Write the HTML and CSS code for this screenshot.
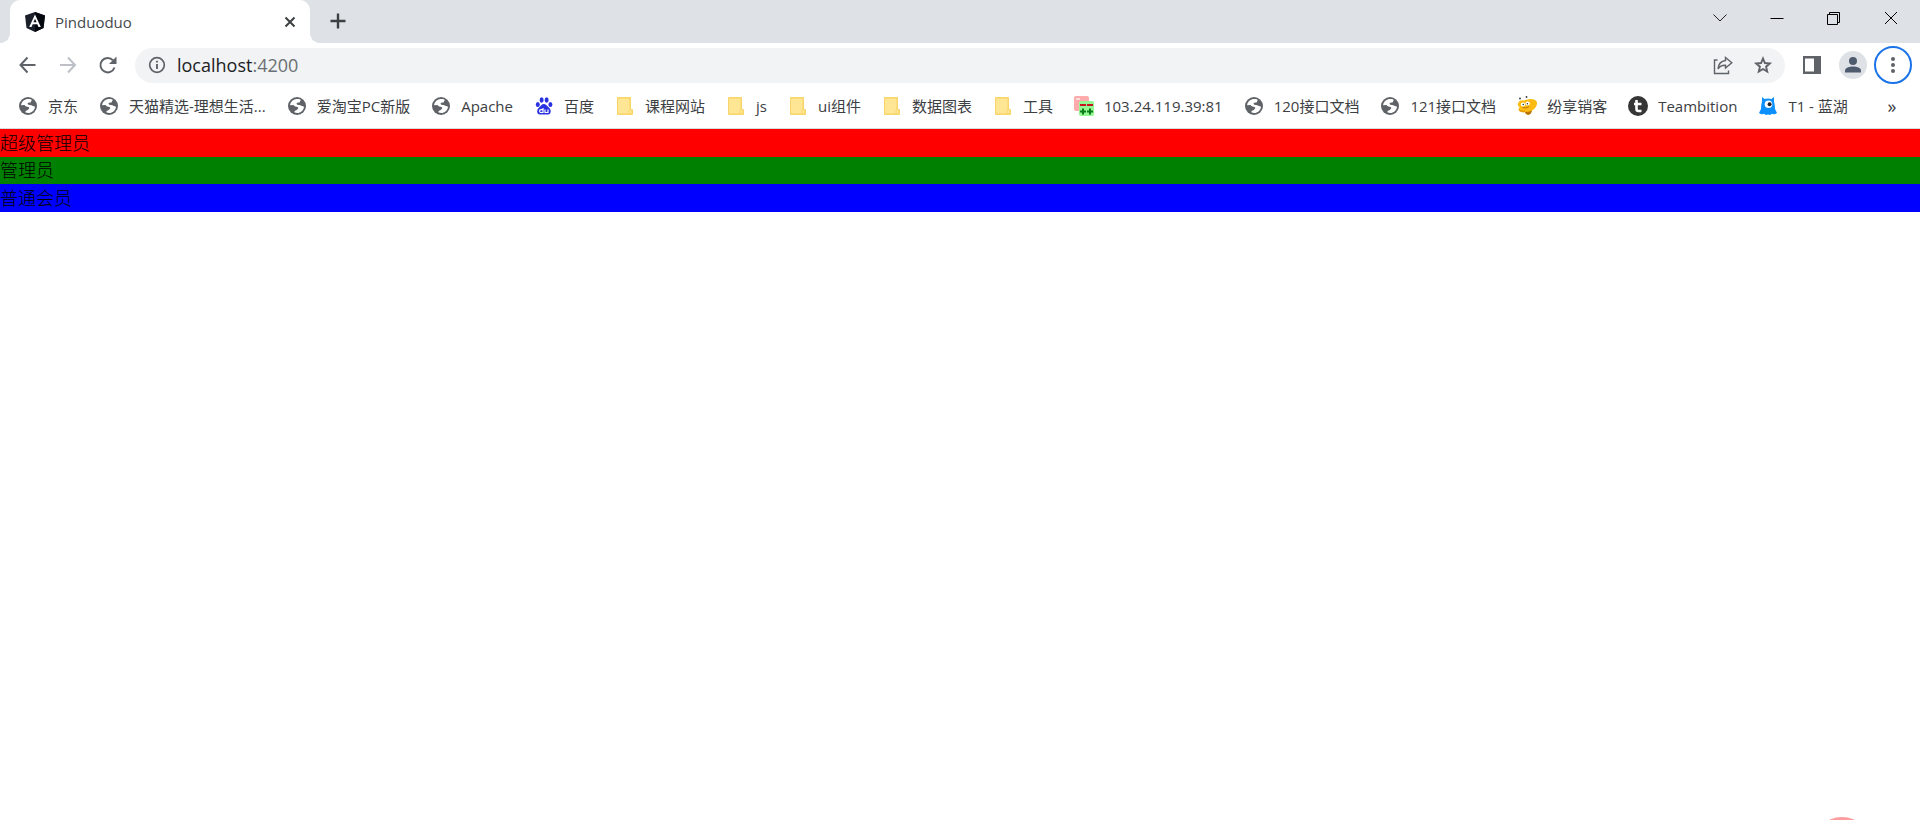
FILE: index.html
```html
<!DOCTYPE html>
<html lang="zh-CN">
<head>
<meta charset="utf-8">
<title>Pinduoduo</title>
<link rel="stylesheet" href="styles.css">
</head>
<body>
<svg class="sprite" aria-hidden="true">
  <symbol id="globe" viewBox="0 0 18 18">
    <circle cx="9" cy="9" r="9" fill="#5f6368"/>
    <path d="M9.300 2.100C11.300 2.100 12.600 2.700 13 3.200C12.200 3.500 11.800 4.300 12 5.200L9.300 5.800C8.300 6.100 8.500 7.300 9.400 7.700L12.400 8.200C13.600 9.300 14.300 8.700 16 9.700C15.700 13.200 12.700 15.900 9.200 16C8.300 16 7.500 15.800 6.600 15.500L6.500 13.900L8.300 13.300L10.200 11.600C10.400 10.500 9.700 9.900 8.500 9.800C6.400 9.700 6.300 8.300 5 8.100L2.100 8.300C2.400 4.800 5.500 2.100 9.300 2.100Z" fill="#fff"/>
  </symbol>
  <symbol id="folder" viewBox="0 0 18 18">
    <path d="M2 0h12a1 1 0 0 1 1 1v11h1q1 0 1 1v4q0 1-1 1H2q-1 0-1-1V1q0-1 1-1Z" fill="#f8d568"/>
    <path d="M2 1.500h11.500v11l-1 1V16.500H2Z" fill="#ffe694"/>
    <path d="M13.500 13h2v3.500h-2Z" fill="#ffe694"/>
  </symbol>
</svg>
<header class="browser">
  <div class="tabstrip">
    <div class="tab">
      <svg class="i20" viewBox="0 0 20 20"><path d="M10 0 20 3.500 18.500 16 10 20 1.500 16 0 3.500Z" fill="#1b1f2a"/><path d="M10 0 20 3.500 18.500 16 10 20Z" fill="#05070e"/><path d="M10 2.500 4.200 15H6.500L7.700 12.200H12.300L13.500 15H15.800ZM10 6.700 11.600 10.300H8.400Z" fill="#fff" fill-rule="evenodd"/></svg>
      <span class="tab-title">Pinduoduo</span>
      <button class="plain" aria-label="关闭标签页"><svg class="i20" viewBox="0 0 20 20"><path d="M5.500 5.500 14.500 14.500M14.500 5.500 5.500 14.500" stroke="#3c4043" stroke-width="2"/></svg></button>
    </div>
    <button class="plain new-tab" aria-label="新标签页"><svg class="i20" viewBox="0 0 20 20"><path d="M10 2.500V17.500M2.500 10H17.500" stroke="#3c4043" stroke-width="2.400"/></svg></button>
    <div class="window-controls">
      <button class="plain" aria-label="搜索标签页"><svg class="i20" viewBox="0 0 20 20"><path d="M3.500 6.500 10 13 16.500 6.500" fill="none" stroke="#222"/></svg></button>
      <button class="plain" aria-label="最小化"><svg class="i20" viewBox="0 0 20 20"><path d="M3.500 10.500H16.500" stroke="#000"/></svg></button>
      <button class="plain" aria-label="还原"><svg class="i20" viewBox="0 0 20 20"><path d="M3.500 6.500H13.500V16.500H3.500ZM5.500 6.500V4.500H15.500V14.500H13.500" fill="none" stroke="#000"/></svg></button>
      <button class="plain" aria-label="关闭"><svg class="i20" viewBox="0 0 20 20"><path d="M4 4 16 16M16 4 4 16" stroke="#000"/></svg></button>
    </div>
  </div>
  <div class="toolbar">
    <button class="plain nav" aria-label="后退"><svg class="i20" viewBox="0 0 20 20"><path d="M17.500 10H3M9.500 2.500 2.500 10 9.500 17.500" fill="none" stroke="#5f6368" stroke-width="2"/></svg></button>
    <button class="plain nav" aria-label="前进" disabled><svg class="i20" viewBox="0 0 20 20"><path d="M2 10H16.500M10 2.500 17 10 10 17.500" fill="none" stroke="#bdc1c6" stroke-width="2"/></svg></button>
    <button class="plain nav" aria-label="刷新"><svg class="i20" viewBox="0 0 20 20"><path d="M16.500 12.500A7.200 7.200 0 1 1 15 5.300" fill="none" stroke="#5f6368" stroke-width="2"/><path d="M18.500 1.500V9H11Z" fill="#5f6368"/></svg></button>
    <div class="omnibox">
      <svg class="i20" viewBox="0 0 20 20"><circle cx="10" cy="10" r="7.300" fill="none" stroke="#5f6368" stroke-width="1.700"/><path d="M10 9V14M10 5.800V7.600" stroke="#5f6368" stroke-width="1.900"/></svg>
      <div class="url" role="textbox" aria-label="地址" contenteditable="true" spellcheck="false">localhost<span class="port">:4200</span></div>
      <button class="plain nav" aria-label="分享"><svg class="i20" viewBox="0 0 20 20"><path d="M4.500 5H1.500V18.500H15.500V15.500" fill="none" stroke="#5f6368" stroke-width="1.400"/><path d="M12.500 2.500 18.800 7.800 12.500 13V10.300Q7.500 10 5 14Q5.500 6.500 12.500 5.500Z" fill="none" stroke="#5f6368" stroke-width="1.400"/></svg></button>
      <button class="plain nav" aria-label="收藏"><svg class="i20" viewBox="0 0 20 20"><path d="M10 3.500 11.900 8 16.800 8.500 13.100 11.700 14.200 16.500 10 14 5.800 16.500 6.900 11.700 3.200 8.500 8.100 8Z" fill="none" stroke="#5f6368" stroke-width="1.900"/></svg></button>
    </div>
    <button class="plain panel" aria-label="侧边栏"><svg class="i20" viewBox="0 0 20 20"><path d="M1 1H19V19H1ZM3 3.500V16.500H12V3.500Z" fill="#5f6368" fill-rule="evenodd"/></svg></button>
    <button class="plain avatar" aria-label="用户"><svg class="i20" viewBox="0 0 20 20"><circle cx="10" cy="6" r="4" fill="#4e5a6e"/><path d="M2 17.500V15.500C2 12.700 6.500 11.500 10 11.500S18 12.700 18 15.500V17.500Z" fill="#4e5a6e"/></svg></button>
    <button class="plain menu" aria-label="菜单"><svg class="i20" viewBox="0 0 20 20"><g fill="#5f6368"><circle cx="10" cy="4" r="2"/><circle cx="10" cy="10" r="2"/><circle cx="10" cy="16" r="2"/></g></svg></button>
  </div>
  <nav class="bookmarks">
    <a href="#"><svg class="i18"><use href="#globe"/></svg>京东</a>
    <a href="#"><svg class="i18"><use href="#globe"/></svg>天猫精选-理想生活...</a>
    <a href="#"><svg class="i18"><use href="#globe"/></svg>爱淘宝PC新版</a>
    <a href="#"><svg class="i18"><use href="#globe"/></svg>Apache</a>
    <a href="#"><svg class="i18" viewBox="0 0 18 18"><g fill="#2932e1"><ellipse cx="2.800" cy="7.500" rx="2" ry="2.600"/><ellipse cx="6.600" cy="3" rx="2" ry="2.700"/><ellipse cx="11.600" cy="3" rx="2" ry="2.700"/><ellipse cx="15.400" cy="7.500" rx="2" ry="2.600"/><path d="M9 7C11.500 7 12.300 9.500 14.300 11S16.500 17.500 13 17.500H5C1.500 17.500 1.500 13 3.700 11S6.500 7 9 7Z"/></g><path d="M8 11V15.500H6A1.300 1.300 0 0 1 6 12.700H8M10 12.500V15.500H13V12.500" fill="none" stroke="#fff" stroke-width="1.200"/></svg>百度</a>
    <a href="#"><svg class="i18"><use href="#folder"/></svg>课程网站</a>
    <a href="#"><svg class="i18"><use href="#folder"/></svg>js</a>
    <a href="#"><svg class="i18"><use href="#folder"/></svg>ui组件</a>
    <a href="#"><svg class="i18"><use href="#folder"/></svg>数据图表</a>
    <a href="#"><svg class="i18"><use href="#folder"/></svg>工具</a>
    <a href="#"><svg class="i20" viewBox="0 0 20 20"><rect width="15" height="15" rx="2" fill="#ffabab"/><rect x="2" y="2" width="4" height="2" fill="#ffdcdc"/><rect x="5" y="5" width="15" height="15" rx="2" fill="#94f794"/><path d="M6 9H12M13 9H19" stroke="#c8141e" stroke-width="2"/><path d="M6 15.500H12M9 12.500V18.500M13 15.500H19M16 12.500V18.500" stroke="#087d16" stroke-width="2"/></svg>103.24.119.39:81</a>
    <a href="#"><svg class="i18"><use href="#globe"/></svg>120接口文档</a>
    <a href="#"><svg class="i18"><use href="#globe"/></svg>121接口文档</a>
    <a href="#"><svg class="i20" viewBox="0 0 20 20"><path d="M1 8Q2 3.500 7 4.500Q12 2 17 3.500Q20.500 5 20 8Q19 12 15 14.500Q14 18.500 11 19Q8 18 8 16Q3 17 1.500 13.500Q1 12 3 11Q0 10 1 8Z" fill="#fbbb12"/><path d="M8 16Q12 16 15 14.500Q14 18.500 11 19Q8 18 8 16Z" fill="#b87408"/><path d="M1.500 13.500Q4 15 8 14.500V16Q3 17 1.500 13.500Z" fill="#e59a0a"/><ellipse cx="6" cy="8.500" rx="2.200" ry="1.900" fill="#fff"/><ellipse cx="10.700" cy="7.500" rx="2.200" ry="1.900" fill="#fff"/><path d="M5.500 11.500Q9 13 12 10.500" fill="none" stroke="#b87408"/><g fill="#333"><circle cx="3" cy="2.500" r=".9"/><circle cx="9.500" cy="1" r=".9"/><circle cx="6.300" cy="8.500" r=".8"/><circle cx="10.400" cy="7.700" r=".8"/></g></svg>纷享销客</a>
    <a href="#"><svg class="i20" viewBox="0 0 20 20"><circle cx="10" cy="10" r="10" fill="#363636"/><path d="M8.500 4V13Q8.500 15 10.500 15H13.500M6 8H13.500" fill="none" stroke="#fff" stroke-width="2.600"/></svg>Teambition</a>
    <a href="#"><svg class="i18" viewBox="0 0 18 18"><path d="M3 0 5.500 2Q9 .8 12.500 2L15 0V4.500Q16 8 16 12L18 16Q15 18 13 16.800Q11 18.800 9 17.200Q7 18.800 5 16.800Q3 18 0 16L2 12Q2 8 3 4.500Z" fill="#0c90ff"/><circle cx="9.500" cy="7.200" r="3.800" fill="#fff"/><circle cx="10.600" cy="7.200" r="2" fill="#20242c"/></svg>T1 - 蓝湖</a>
    <button class="plain more" aria-label="更多书签">»</button>
  </nav>
</header>
<main class="page">
  <div class="role role-super">超级管理员</div>
  <div class="role role-admin">管理员</div>
  <div class="role role-member">普通会员</div>
</main>
<div class="bubble"></div>
</body>
</html>
```
FILE: styles.css
```css
* { box-sizing: border-box; }
body {
  margin: 0;
  background: #fff;
  color: #000;
  font-family: "Open Sans", "Noto Sans CJK SC", sans-serif;
  font-size: 15px;
}
svg { display: block; flex: none; }
.sprite { position: absolute; width: 0; height: 0; }
.i18 { width: 18px; height: 18px; margin: 0 1px; }
.i20 { width: 20px; height: 20px; }
.plain {
  display: flex;
  align-items: center;
  justify-content: center;
  flex: none;
  padding: 0;
  border: 0;
  background: none;
  color: #3c4043;
  font: inherit;
}
.tabstrip {
  display: flex;
  height: 43px;
  padding: 0 1px 0 10px;
  background: #dee1e6;
}
.tab {
  position: relative;
  display: flex;
  align-items: center;
  gap: 10px;
  width: 300px;
  padding: 0 10px 0 15px;
  border-radius: 10px 10px 0 0;
  background: #fff;
  color: #45494d;
}
.tab::before, .tab::after {
  content: "";
  position: absolute;
  bottom: 0;
  width: 10px;
  height: 10px;
}
.tab::before { right: 100%; background: radial-gradient(circle at 0 0, #dee1e6 10px, #fff 10px); }
.tab::after { left: 100%; background: radial-gradient(circle at 100% 0, #dee1e6 10px, #fff 10px); }
.tab-title { flex: 1; font-size: 15px; }
.new-tab { width: 55px; height: 42px; }
.window-controls { display: flex; margin-left: auto; height: 36px; }
.window-controls .plain { width: 57px; }
.toolbar {
  display: flex;
  align-items: center;
  height: 44px;
  padding: 0 8px;
}
.nav { width: 40px; height: 36px; }
.omnibox {
  display: flex;
  align-items: center;
  flex: 1;
  height: 35px;
  margin: 0 8px 0 7px;
  padding: 0 2px 0 12px;
  border-radius: 18px;
  background: #f1f3f4;
}
.url {
  flex: 1;
  margin-left: 10px;
  outline: 0;
  color: #202124;
  font-size: 18px;
  line-height: 24px;
}
.port { color: #6b6f73; }
.panel { width: 38px; }
.avatar { width: 28px; height: 28px; margin: 0 7px 0 8px; border-radius: 50%; background: #dee1e6; }
.menu { width: 38px; height: 38px; border: 2px solid #1a73e8; border-radius: 50%; }
.bookmarks {
  display: flex;
  align-items: center;
  gap: 21px;
  height: 42px;
  padding: 0 18px 3px;
  border-bottom: 1px solid #d5dce1;
}
.bookmarks a {
  display: flex;
  align-items: center;
  gap: 10px;
  color: #3c4043;
  line-height: 20px;
  text-decoration: none;
  white-space: nowrap;
}
.more { width: 20px; margin-left: auto; font-size: 18px; line-height: 20px; }
.role { font-size: 18px; font-weight: 300; line-height: 28px; }
.role-super { background: #f00; }
.role-admin { background: #008000; line-height: 27px; }
.role-member { background: #00f; }
.bubble {
  position: fixed;
  right: 48px;
  bottom: -57px;
  width: 60px;
  height: 60px;
  border-radius: 50%;
  background: #fd9d9d;
}
```
